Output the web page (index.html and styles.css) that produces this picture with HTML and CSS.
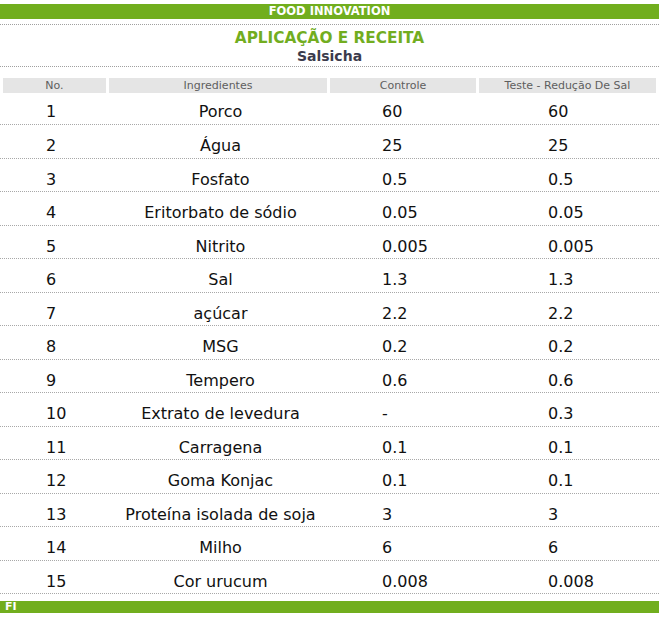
FILE: index.html
```html
<!DOCTYPE html>
<html lang="pt">
<head>
<meta charset="utf-8">
<title>Food Innovation - Salsicha</title>
<link rel="stylesheet" href="styles.css">
</head>
<body>
<div class="page">
  <div class="topbar">FOOD INNOVATION</div>
  <div class="rule rule-top"></div>
  <div class="titleblock">
    <div class="title">APLICAÇÃO E RECEITA</div>
    <div class="subtitle">Salsicha</div>
  </div>
  <div class="rule"></div>
  <div class="head">
    <div class="hcell">No.</div>
    <div class="hcell">Ingredientes</div>
    <div class="hcell">Controle</div>
    <div class="hcell">Teste - Redução De Sal</div>
  </div>
  <div class="rows">
    <div class="row"><span class="c-no">1</span><span class="c-ing">Porco</span><span class="c-ctl">60</span><span class="c-tst">60</span></div>
    <div class="row"><span class="c-no">2</span><span class="c-ing">Água</span><span class="c-ctl">25</span><span class="c-tst">25</span></div>
    <div class="row"><span class="c-no">3</span><span class="c-ing">Fosfato</span><span class="c-ctl">0.5</span><span class="c-tst">0.5</span></div>
    <div class="row"><span class="c-no">4</span><span class="c-ing">Eritorbato de sódio</span><span class="c-ctl">0.05</span><span class="c-tst">0.05</span></div>
    <div class="row"><span class="c-no">5</span><span class="c-ing">Nitrito</span><span class="c-ctl">0.005</span><span class="c-tst">0.005</span></div>
    <div class="row"><span class="c-no">6</span><span class="c-ing">Sal</span><span class="c-ctl">1.3</span><span class="c-tst">1.3</span></div>
    <div class="row"><span class="c-no">7</span><span class="c-ing">açúcar</span><span class="c-ctl">2.2</span><span class="c-tst">2.2</span></div>
    <div class="row"><span class="c-no">8</span><span class="c-ing">MSG</span><span class="c-ctl">0.2</span><span class="c-tst">0.2</span></div>
    <div class="row"><span class="c-no">9</span><span class="c-ing">Tempero</span><span class="c-ctl">0.6</span><span class="c-tst">0.6</span></div>
    <div class="row"><span class="c-no">10</span><span class="c-ing">Extrato de levedura</span><span class="c-ctl">-</span><span class="c-tst">0.3</span></div>
    <div class="row"><span class="c-no">11</span><span class="c-ing">Carragena</span><span class="c-ctl">0.1</span><span class="c-tst">0.1</span></div>
    <div class="row"><span class="c-no">12</span><span class="c-ing">Goma Konjac</span><span class="c-ctl">0.1</span><span class="c-tst">0.1</span></div>
    <div class="row"><span class="c-no">13</span><span class="c-ing">Proteína isolada de soja</span><span class="c-ctl">3</span><span class="c-tst">3</span></div>
    <div class="row"><span class="c-no">14</span><span class="c-ing">Milho</span><span class="c-ctl">6</span><span class="c-tst">6</span></div>
    <div class="row"><span class="c-no">15</span><span class="c-ing">Cor urucum</span><span class="c-ctl">0.008</span><span class="c-tst">0.008</span></div>
  </div>
  <div class="footbar">FI</div>
</div>
</body>
</html>
```
FILE: styles.css
```css
html, body {
  margin: 0;
  padding: 0;
  background: #ffffff;
}
.page {
  width: 659px;
  padding-top: 4px;
  font-family: "DejaVu Sans", Verdana, sans-serif;
  color: #111111;
}
.topbar {
  height: 15px;
  background: #71ae1e;
  color: #ffffff;
  font-size: 11.5px;
  font-weight: 700;
  line-height: 15px;
  text-align: center;
}
.rule {
  height: 1px;
  border-top: 1px dotted #a0a0a0;
  box-sizing: border-box;
}
.rule-top {
  margin-top: 5px;
}
.titleblock {
  height: 41px;
  box-sizing: border-box;
  display: flex;
  flex-direction: column;
  align-items: center;
  padding-top: 4px;
}
.title {
  color: #72ad1f;
  font-size: 15.3px;
  font-weight: 700;
  line-height: 18px;
}
.subtitle {
  color: #3b3b4c;
  font-size: 14px;
  font-weight: 700;
  line-height: 17px;
  margin-top: 1px;
}
.head {
  display: grid;
  grid-template-columns: 103px 218px 146px 177px;
  column-gap: 3px;
  padding-left: 3px;
  margin-top: 11px;
  height: 15px;
}
.hcell {
  background: #e5e5e5;
  color: #5e5e5e;
  font-size: 11px;
  line-height: 15px;
  text-align: center;
}
.rows {
  display: flex;
  flex-direction: column;
}
.row {
  display: grid;
  grid-template-columns: 103px 218px 146px 177px;
  column-gap: 3px;
  padding-left: 3px;
  height: 33.5px;
  box-sizing: border-box;
  border-bottom: 1px dotted #a8a8a8;
  align-items: end;
  padding-bottom: 1.5px;
  font-size: 16px;
  line-height: 20px;
}
.row:first-child {
  height: 32px;
  padding-bottom: 2.5px;
}
.c-no {
  padding-left: 43px;
}
.c-ing {
  text-align: center;
  padding-left: 5px;
}
.c-ctl {
  padding-left: 52px;
}
.c-tst {
  padding-left: 69px;
}
.footbar {
  margin-top: 7px;
  height: 12px;
  background: #71ae1e;
  color: #ffffff;
  font-size: 11px;
  font-weight: 700;
  line-height: 12px;
  padding-left: 5px;
}
```
